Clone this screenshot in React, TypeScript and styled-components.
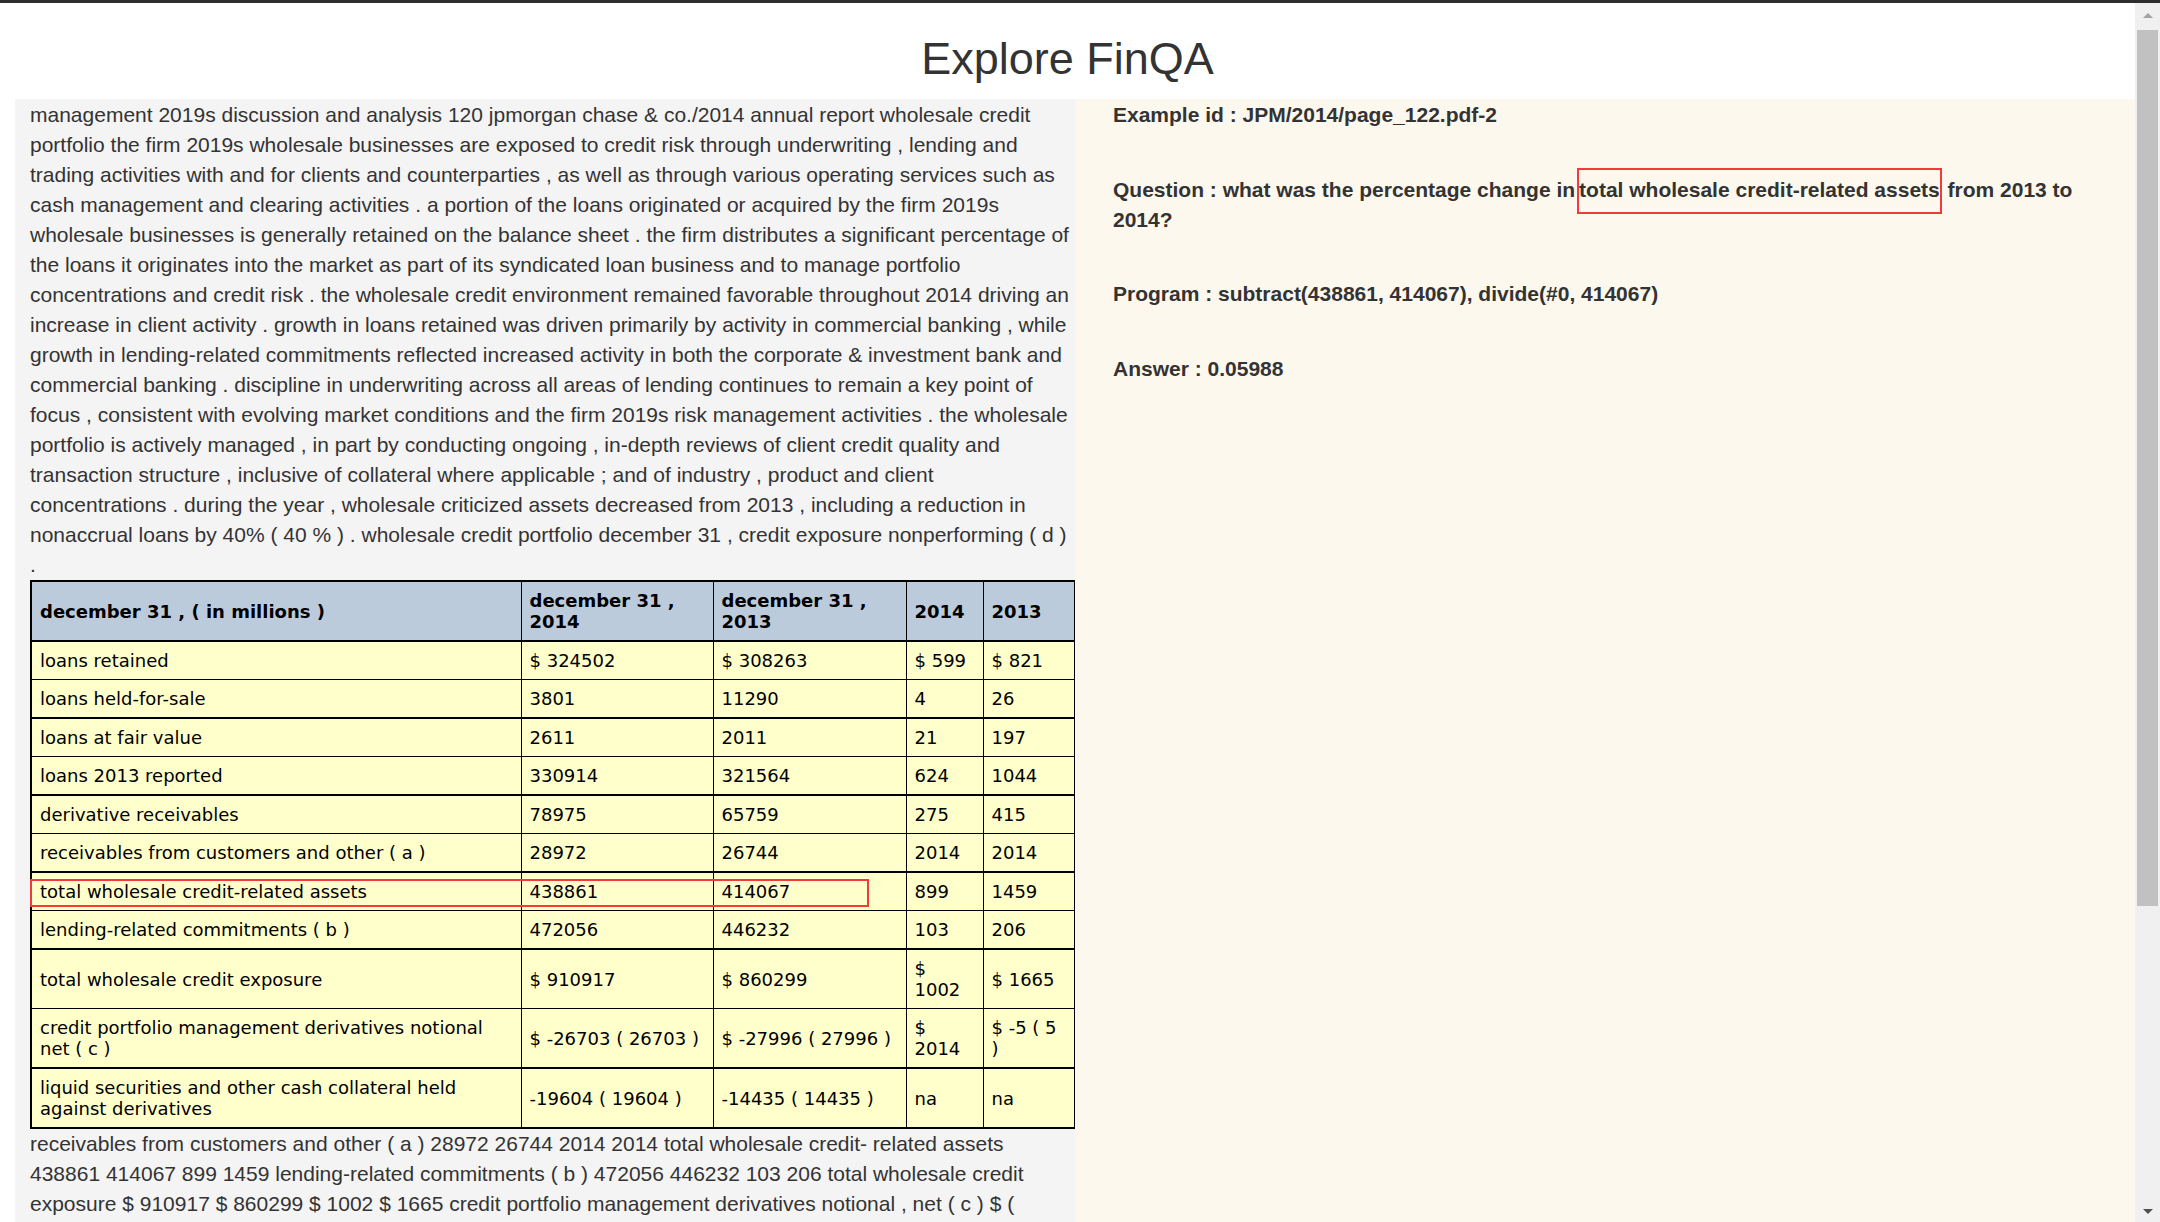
import React from "react";
import styled, { createGlobalStyle } from "styled-components";

const GlobalStyle = createGlobalStyle`
  html { scrollbar-width: none; }
  html::-webkit-scrollbar { display: none; }
  body {
    margin: 0;
    background: #ffffff;
    color: #333333;
    font-family: "Liberation Sans", Arial, sans-serif;
  }
`;

const TopBar = styled.div`
  height: 3px;
  background: #2e2e2e;
`;

const ScrollRail = styled.div`
  position: fixed;
  top: 3px;
  right: 0;
  bottom: 0;
  width: 25px;
  background: #f0f0f0;
  display: flex;
  flex-direction: column;
  align-items: center;
`;

const ArrowUp = styled.div`
  margin-top: 10px;
  width: 0;
  height: 0;
  border-left: 5.5px solid transparent;
  border-right: 5.5px solid transparent;
  border-bottom: 5px solid #a3a3a3;
`;

const Thumb = styled.div`
  margin-top: 12px;
  width: 21px;
  height: 876px;
  background: #c1c1c1;
`;

const RailSpacer = styled.div`
  flex: 1;
`;

const ArrowDown = styled.div`
  margin-bottom: 8px;
  width: 0;
  height: 0;
  border-left: 5.5px solid transparent;
  border-right: 5.5px solid transparent;
  border-top: 5px solid #505050;
`;

const Page = styled.div`
  width: 2135px;
  min-height: 1627px;
  display: flex;
  flex-direction: column;
`;

const Title = styled.h1`
  margin: 0;
  padding: 30px 0 14px;
  font-size: 45px;
  line-height: 52px;
  font-weight: normal;
  text-align: center;
  color: #333333;
`;

const Columns = styled.main`
  flex: 1;
  display: grid;
  grid-template-columns: 1060px 1060px;
  padding-left: 15px;
`;

const LeftPanel = styled.section`
  background: #f4f4f4;
  padding: 1px 0 0 15px;
`;

const Passage = styled.div`
  font-size: 21px;
  line-height: 30px;
  color: #333333;
`;

const RightPanel = styled.section`
  background: #fdf8ee;
  padding: 1px 38px 0 38px;
`;

const Field = styled.div`
  font-size: 21px;
  line-height: 30px;
  font-weight: bold;
  color: #333333;
  margin-bottom: 44.5px;
`;

const Mark = styled.span`
  border: 2px solid #f33a3a;
  padding: 8px 0 11px;
  margin-left: 2px;
`;

const DataTable = styled.table`
  width: 1044px;
  table-layout: fixed;
  border-collapse: collapse;
  border: 2px solid #000;
  font-family: "DejaVu Sans", Verdana, sans-serif;
  font-size: 18px;
  line-height: 21px;
  color: #000;
`;

const HeadCell = styled.th`
  background: #bccbdb;
  font-weight: bold;
  text-align: left;
  vertical-align: middle;
  padding: 8px;
  border: 1px solid #000;
  border-bottom-width: 2px;
`;

const Cell = styled.td<{ $thick?: boolean; $anchor?: boolean }>`
  position: ${(p) => (p.$anchor ? "relative" : "static")};
  background: #ffffcc;
  text-align: left;
  vertical-align: middle;
  padding: 8px;
  border: 1px solid #000;
  border-bottom-width: ${(p) => (p.$thick ? 2 : 1)}px;
`;

const RowHighlight = styled.span`
  position: absolute;
  z-index: 2;
  left: -2px;
  top: 6px;
  bottom: 3px;
  width: 839px;
  border: 2px solid #f33a3a;
  box-sizing: border-box;
  pointer-events: none;
`;

const colWidths = [490, 192, 193, 77, 92];

const header = [
  "december 31 , ( in millions )",
  "december 31 , 2014",
  "december 31 , 2013",
  "2014",
  "2013",
];

const rows: string[][] = [
  ["loans retained", "$ 324502", "$ 308263", "$ 599", "$ 821"],
  ["loans held-for-sale", "3801", "11290", "4", "26"],
  ["loans at fair value", "2611", "2011", "21", "197"],
  ["loans 2013 reported", "330914", "321564", "624", "1044"],
  ["derivative receivables", "78975", "65759", "275", "415"],
  ["receivables from customers and other ( a )", "28972", "26744", "2014", "2014"],
  ["total wholesale credit-related assets", "438861", "414067", "899", "1459"],
  ["lending-related commitments ( b )", "472056", "446232", "103", "206"],
  ["total wholesale credit exposure", "$ 910917", "$ 860299", "$ 1002", "$ 1665"],
  [
    "credit portfolio management derivatives notional net ( c )",
    "$ -26703 ( 26703 )",
    "$ -27996 ( 27996 )",
    "$ 2014",
    "$ -5 ( 5 )",
  ],
  [
    "liquid securities and other cash collateral held against derivatives",
    "-19604 ( 19604 )",
    "-14435 ( 14435 )",
    "na",
    "na",
  ],
];

const HIGHLIGHT_ROW = 6;

const preText =
  "management 2019s discussion and analysis 120 jpmorgan chase & co./2014 annual report wholesale credit portfolio the firm 2019s wholesale businesses are exposed to credit risk through underwriting , lending and trading activities with and for clients and counterparties , as well as through various operating services such as cash management and clearing activities . a portion of the loans originated or acquired by the firm 2019s wholesale businesses is generally retained on the balance sheet . the firm distributes a significant percentage of the loans it originates into the market as part of its syndicated loan business and to manage portfolio concentrations and credit risk . the wholesale credit environment remained favorable throughout 2014 driving an increase in client activity . growth in loans retained was driven primarily by activity in commercial banking , while growth in lending-related commitments reflected increased activity in both the corporate & investment bank and commercial banking . discipline in underwriting across all areas of lending continues to remain a key point of focus , consistent with evolving market conditions and the firm 2019s risk management activities . the wholesale portfolio is actively managed , in part by conducting ongoing , in-depth reviews of client credit quality and transaction structure , inclusive of collateral where applicable ; and of industry , product and client concentrations . during the year , wholesale criticized assets decreased from 2013 , including a reduction in nonaccrual loans by 40% ( 40 % ) . wholesale credit portfolio december 31 , credit exposure nonperforming ( d ) .";

const postText =
  "receivables from customers and other ( a ) 28972 26744 2014 2014 total wholesale credit- related assets 438861 414067 899 1459 lending-related commitments ( b ) 472056 446232 103 206 total wholesale credit exposure $ 910917 $ 860299 $ 1002 $ 1665 credit portfolio management derivatives notional , net ( c ) $ ( 26703 ) $ ( 27996 ) $ ( 2014 ) $ ( 5 ) liquid securities and other cash collateral held against derivatives ( 19604 ) ( 14435 ) na na ( a ) receivables from customers and other include $ 28.8 billion and $ 26.5 billion of margin loans at december 31 , 2014 and 2013 , respectively , to prime and retail brokerage customers ; these are classified in accrued interest and accounts receivable on the consolidated balance sheets . ( b ) includes unused advised lines of credit of $ 105.2 billion and $ 102.0 billion at december 31 , 2014 and 2013 , respectively . an advised line of credit is a revolving credit line which specifies the maximum amount the firm may extend to a customer , and the firm has no obligation to lend . ( c ) represents the net notional amount of protection purchased and sold through credit derivatives used to manage both performing and nonperforming wholesale credit exposures ; these derivatives do not qualify for hedge accounting under u.s . gaap . ( d ) excludes assets acquired in loan satisfactions .";

export default function App() {
  return (
    <>
      <GlobalStyle />
      <TopBar />
      <Page>
        <Title>Explore FinQA</Title>
        <Columns>
          <LeftPanel>
            <Passage>{preText}</Passage>
            <DataTable>
              <colgroup>
                {colWidths.map((w, i) => (
                  <col key={i} style={{ width: w }} />
                ))}
              </colgroup>
              <thead>
                <tr>
                  {header.map((h, i) => (
                    <HeadCell key={i}>{h}</HeadCell>
                  ))}
                </tr>
              </thead>
              <tbody>
                {rows.map((row, r) => (
                  <tr key={r}>
                    {row.map((c, ci) => {
                      const anchor = r === HIGHLIGHT_ROW && ci === 0;
                      return (
                        <Cell key={ci} $thick={r % 2 === 1} $anchor={anchor}>
                          {anchor && <RowHighlight />}
                          {c}
                        </Cell>
                      );
                    })}
                  </tr>
                ))}
              </tbody>
            </DataTable>
            <Passage>{postText}</Passage>
          </LeftPanel>
          <RightPanel>
            <Field>Example id : JPM/2014/page_122.pdf-2</Field>
            <Field>
              Question : what was the percentage change in
              <Mark>total wholesale credit-related assets</Mark> from 2013 to 2014?
            </Field>
            <Field>Program : subtract(438861, 414067), divide(#0, 414067)</Field>
            <Field>Answer : 0.05988</Field>
          </RightPanel>
        </Columns>
      </Page>
      <ScrollRail>
        <ArrowUp />
        <Thumb />
        <RailSpacer />
        <ArrowDown />
      </ScrollRail>
    </>
  );
}
